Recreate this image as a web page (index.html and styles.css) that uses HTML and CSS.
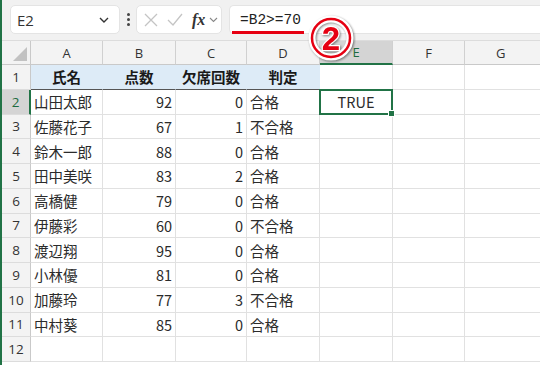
FILE: index.html
```html
<!DOCTYPE html>
<html lang="ja">
  <head>
    <meta charset="UTF-8" />
    <title>判定シート</title>
    <link rel="stylesheet" href="styles.css">
  </head>
  <body>
    <div class="window">
      <div class="toolbar">
        <div class="namebox">
          <span>E2</span>
          <svg class="chev" width="10" height="6" viewBox="0 0 10 6"><polyline points="1,1 5,5 9,1" /></svg>
        </div>
        <div class="dots"><i></i><i></i><i></i></div>
        <div class="fxbox">
          <svg width="14" height="14" viewBox="0 0 14 14"><path d="M1 1L13 13M13 1L1 13" /></svg>
          <svg width="16" height="14" viewBox="0 0 16 14"><path d="M1 7L6 12L15 1" /></svg>
          <span class="fx">fx</span>
          <svg class="chev small" width="9" height="6" viewBox="0 0 9 6"><polyline points="1,1 4.5,4.5 8,1" /></svg>
        </div>
        <div class="formula">
          <span class="formula-text">=B2&gt;=70</span>
        </div>
      </div>

      <div class="sheet">
        <div class="corner"></div>
        <div class="col-head">A</div>
        <div class="col-head">B</div>
        <div class="col-head">C</div>
        <div class="col-head">D</div>
        <div class="col-head active">E</div>
        <div class="col-head">F</div>
        <div class="col-head">G</div>

        <div class="row-head">1</div>
        <div class="cell title">氏名</div>
        <div class="cell title">点数</div>
        <div class="cell title">欠席回数</div>
        <div class="cell title">判定</div>
        <div class="cell"></div>
        <div class="cell"></div>
        <div class="cell"></div>

        <div class="row-head active">2</div>
        <div class="cell">山田太郎</div>
        <div class="cell num">92</div>
        <div class="cell num">0</div>
        <div class="cell">合格</div>
        <div class="cell center selected">TRUE</div>
        <div class="cell"></div>
        <div class="cell"></div>

        <div class="row-head">3</div>
        <div class="cell">佐藤花子</div>
        <div class="cell num">67</div>
        <div class="cell num">1</div>
        <div class="cell">不合格</div>
        <div class="cell"></div>
        <div class="cell"></div>
        <div class="cell"></div>

        <div class="row-head">4</div>
        <div class="cell">鈴木一郎</div>
        <div class="cell num">88</div>
        <div class="cell num">0</div>
        <div class="cell">合格</div>
        <div class="cell"></div>
        <div class="cell"></div>
        <div class="cell"></div>

        <div class="row-head">5</div>
        <div class="cell">田中美咲</div>
        <div class="cell num">83</div>
        <div class="cell num">2</div>
        <div class="cell">合格</div>
        <div class="cell"></div>
        <div class="cell"></div>
        <div class="cell"></div>

        <div class="row-head">6</div>
        <div class="cell">高橋健</div>
        <div class="cell num">79</div>
        <div class="cell num">0</div>
        <div class="cell">合格</div>
        <div class="cell"></div>
        <div class="cell"></div>
        <div class="cell"></div>

        <div class="row-head">7</div>
        <div class="cell">伊藤彩</div>
        <div class="cell num">60</div>
        <div class="cell num">0</div>
        <div class="cell">不合格</div>
        <div class="cell"></div>
        <div class="cell"></div>
        <div class="cell"></div>

        <div class="row-head">8</div>
        <div class="cell">渡辺翔</div>
        <div class="cell num">95</div>
        <div class="cell num">0</div>
        <div class="cell">合格</div>
        <div class="cell"></div>
        <div class="cell"></div>
        <div class="cell"></div>

        <div class="row-head">9</div>
        <div class="cell">小林優</div>
        <div class="cell num">81</div>
        <div class="cell num">0</div>
        <div class="cell">合格</div>
        <div class="cell"></div>
        <div class="cell"></div>
        <div class="cell"></div>

        <div class="row-head">10</div>
        <div class="cell">加藤玲</div>
        <div class="cell num">77</div>
        <div class="cell num">3</div>
        <div class="cell">不合格</div>
        <div class="cell"></div>
        <div class="cell"></div>
        <div class="cell"></div>

        <div class="row-head">11</div>
        <div class="cell">中村葵</div>
        <div class="cell num">85</div>
        <div class="cell num">0</div>
        <div class="cell">合格</div>
        <div class="cell"></div>
        <div class="cell"></div>
        <div class="cell"></div>

        <div class="row-head">12</div>
        <div class="cell"></div>
        <div class="cell"></div>
        <div class="cell"></div>
        <div class="cell"></div>
        <div class="cell"></div>
        <div class="cell"></div>
        <div class="cell"></div>
      </div>

      <!-- annotation marker -->
      <svg class="marker" width="50" height="50" viewBox="0 0 50 50">
        <g class="marker-shadow">
          <circle cx="25" cy="25" r="19" class="ring-white" />
          <circle cx="25" cy="25" r="19" class="ring-red" />
          <text x="25" y="37" text-anchor="middle" class="marker-num">2</text>
        </g>
      </svg>
    </div>
  </body>
</html>
```

FILE: styles.css
```css
* {
  margin: 0;
  padding: 0;
  box-sizing: border-box;
}

body {
  width: 540px;
  height: 365px;
  overflow: hidden;
  background: #ffffff;
  font-family: "Noto Sans CJK JP", "Noto Sans", sans-serif;
  color: #262626;
}

.window {
  position: relative;
  height: 365px;
  border-left: 2px solid #217346;
  overflow: hidden;
}

/* Formula bar */
.toolbar {
  height: 40px;
  background: #f1f1f1;
  display: flex;
  align-items: flex-start;
  padding: 5px 0 0 8px;
}

.namebox {
  width: 110px;
  height: 29px;
  background: #ffffff;
  border: 1px solid #e4e4e4;
  border-radius: 5px;
  display: flex;
  align-items: center;
  justify-content: space-between;
  padding: 0 10px 0 6px;
  font-family: "Open Sans", "Noto Sans", sans-serif;
  font-size: 15px;
  color: #333;
}

.chev polyline {
  fill: none;
  stroke: #333;
  stroke-width: 1.4;
}

.chev.small polyline {
  stroke: #888;
  stroke-width: 1.1;
}

.dots {
  width: 16px;
  height: 29px;
  display: flex;
  flex-direction: column;
  align-items: center;
  justify-content: center;
  gap: 2px;
}

.dots i {
  width: 3px;
  height: 3px;
  border-radius: 50%;
  background: #444;
}

.fxbox {
  width: 86px;
  height: 29px;
  background: #ffffff;
  border: 1px solid #e4e4e4;
  border-radius: 5px;
  display: flex;
  align-items: center;
  gap: 9px;
  padding-left: 7px;
}

.fxbox svg path {
  fill: none;
  stroke: #c4c4c4;
  stroke-width: 1.3;
}

.fx {
  font-family: "Liberation Serif", serif;
  font-style: italic;
  font-weight: bold;
  font-size: 16px;
  color: #333;
  margin-right: -5px;
}

.formula {
  flex: 1;
  height: 29px;
  margin-left: 7px;
  background: #ffffff;
  border: 1px solid #e4e4e4;
  border-right: none;
  border-radius: 5px 0 0 5px;
  display: flex;
  align-items: center;
  padding-left: 10px;
}

.formula-text {
  position: relative;
  font-family: "Liberation Mono", monospace;
  font-size: 14.5px;
  color: #222;
}

.formula-text::after {
  content: "";
  position: absolute;
  left: -8px;
  top: 19px;
  width: 72px;
  height: 3px;
  background: #e60012;
}

/* Sheet grid */
.sheet {
  display: grid;
  grid-template-columns: 29px 72px 73px 71px 73px 73px 72px 73px 40px;
  grid-template-rows: 24px repeat(12, 24.75px);
  border-top: 1px solid #dcdcdc;
}

.corner,
.col-head,
.row-head {
  background: #f3f3f3;
  font-family: "Open Sans", "Noto Sans", sans-serif;
  font-size: 13px;
  color: #333;
  display: flex;
  align-items: center;
  justify-content: center;
}

.corner {
  position: relative;
  border-right: 1px solid #c9c9c9;
  border-bottom: 1px solid #c9c9c9;
}

.corner::after {
  content: "";
  position: absolute;
  right: 3px;
  bottom: 3px;
  border-left: 14px solid transparent;
  border-bottom: 14px solid #c2c2c2;
}

.col-head {
  border-right: 1px solid #d0d0d0;
  border-bottom: 1px solid #c9c9c9;
}

.col-head:nth-child(8) {
  grid-column: span 2;
  justify-content: flex-start;
  padding-left: 31px;
}

.row-head {
  border-right: 1px solid #c9c9c9;
  border-bottom: 1px solid #dcdcdc;
  font-size: 13.5px;
}

.col-head.active {
  background: #d4d4d4;
  color: #1d6b40;
  border-bottom: 2px solid #217346;
}

.row-head.active {
  background: #d4d4d4;
  color: #1d6b40;
  border-right: 2px solid #217346;
}

.cell {
  border-right: 1px solid #e1e1e1;
  border-bottom: 1px solid #e1e1e1;
  font-size: 14.5px;
  display: flex;
  align-items: center;
  padding: 0 3px;
  white-space: nowrap;
  color: #2b2b2b;
}

.cell:nth-child(8n + 8) {
  grid-column: span 2;
}

.cell.num {
  justify-content: flex-end;
}

.cell.center {
  justify-content: center;
}

.cell.title {
  background: #ddebf7;
  font-weight: bold;
  justify-content: center;
  border-right-color: #ddebf7;
  border-bottom: 1px solid #555;
  color: #1a1a1a;
}

.cell.selected {
  position: relative;
}

.cell.selected::after {
  content: "";
  position: absolute;
  inset: -1px -1px -1px -1px;
  border: 2px solid #217346;
}

.cell.selected::before {
  content: "";
  position: absolute;
  right: -3px;
  bottom: -3px;
  width: 5px;
  height: 5px;
  background: #217346;
  border: 1px solid #ffffff;
  z-index: 1;
}

/* Annotation */
.marker {
  position: absolute;
  left: 304px;
  top: 13px;
}

.marker-shadow {
  filter: drop-shadow(1px 1px 1px rgba(0, 0, 0, 0.45));
}

.ring-white {
  fill: none;
  stroke: #ffffff;
  stroke-width: 7;
}

.ring-red {
  fill: none;
  stroke: #e60012;
  stroke-width: 2.5;
}

.marker-num {
  font-family: "Liberation Sans", sans-serif;
  font-weight: bold;
  font-size: 33px;
  fill: #e60012;
  stroke: #ffffff;
  stroke-width: 2.5;
  paint-order: stroke;
}
```
